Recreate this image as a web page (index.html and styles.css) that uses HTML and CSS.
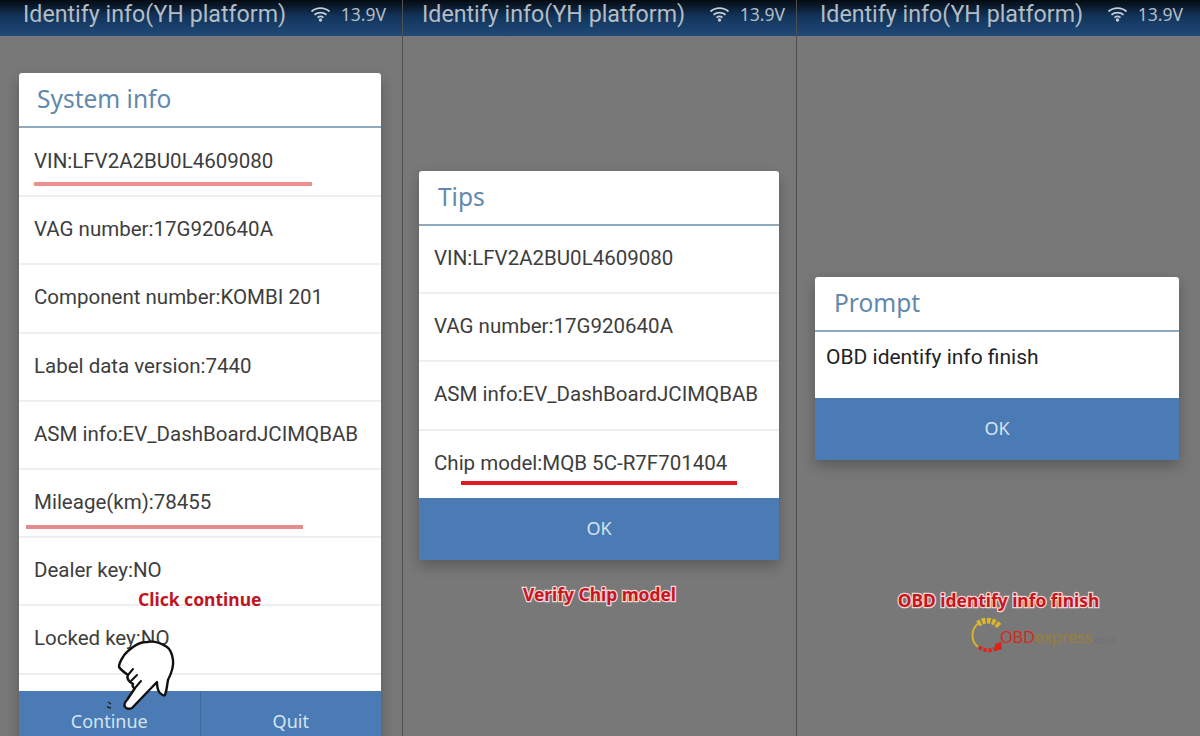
FILE: index.html
```html
<!DOCTYPE html>
<html>
<head>
	<title>Identify info (YH platform)</title>
	<link rel="stylesheet" href="styles.css">
</head>
<body>
	<div class="screens">

		<!-- Left screen: system info -->
		<section class="screen screen-system">
			<header class="topbar">
				<span class="topbar-title">Identify info(YH platform)</span>
				<span class="topbar-status">
					<svg class="wifi" viewBox="0 0 20 16"><path d="M1 5.5C6 1 14 1 19 5.5M4 8.8C7.5 5.8 12.5 5.8 16 8.8M7 11.6C8.8 10.2 11.2 10.2 13 11.6" fill="none" stroke="#c4ccd4" stroke-width="1.8"/><circle cx="10" cy="14" r="1.7" fill="#c4ccd4"/></svg>
					13.9V
				</span>
			</header>
			<div class="dialog">
				<h2 class="dialog-title">System info</h2>
				<div class="row">VIN:LFV2A2BU0L4609080<i class="mark mark-vin"></i></div>
				<div class="row">VAG number:17G920640A</div>
				<div class="row">Component number:KOMBI 201</div>
				<div class="row">Label data version:7440</div>
				<div class="row">ASM info:EV_DashBoardJCIMQBAB</div>
				<div class="row">Mileage(km):78455<i class="mark mark-km"></i></div>
				<div class="row">Dealer key:NO</div>
				<div class="row">Locked key:NO</div>
				<div class="row row-empty"></div>
				<div class="buttons">
					<div class="btn">Continue</div>
					<div class="btn">Quit</div>
				</div>
			</div>
			<span class="note note-click">Click continue</span>
			<svg class="hand" viewBox="0 0 60 75">
				<path d="M8 69C10 71 13 71 15 70L40 44C40 48 41 53 43 55C45 57 47 58 48 57C50 52 50 47 51 42C54 36 57 29 56 22C55 15 53 11 50 9C44 5 36 3 30 4C25 4 20 6 16 9C12 12 8 15 6 19C4 22 2 26 2 29C4 32 8 35 11 37C10 39 11 42 13 44L16 46C15 48 16 50 18 50L10 62C8 64 7 67 8 69Z" fill="#fff" stroke="#111" stroke-width="2.4" stroke-linejoin="round"/>
				<path d="M11 37L16 31M13 44L20 37M18 50L24 43" fill="none" stroke="#111" stroke-width="2" stroke-linecap="round"/>
			</svg>
			<svg class="tap" viewBox="0 0 10 10"><path d="M1 1L4 3M0 6L4 7" stroke="#222" stroke-width="1.4"/></svg>
		</section>

		<!-- Middle screen: chip model -->
		<section class="screen screen-tips">
			<header class="topbar">
				<span class="topbar-title">Identify info(YH platform)</span>
				<span class="topbar-status">
					<svg class="wifi" viewBox="0 0 20 16"><path d="M1 5.5C6 1 14 1 19 5.5M4 8.8C7.5 5.8 12.5 5.8 16 8.8M7 11.6C8.8 10.2 11.2 10.2 13 11.6" fill="none" stroke="#c4ccd4" stroke-width="1.8"/><circle cx="10" cy="14" r="1.7" fill="#c4ccd4"/></svg>
					13.9V
				</span>
			</header>
			<div class="dialog">
				<h2 class="dialog-title">Tips</h2>
				<div class="row">VIN:LFV2A2BU0L4609080</div>
				<div class="row">VAG number:17G920640A</div>
				<div class="row">ASM info:EV_DashBoardJCIMQBAB</div>
				<div class="row row-last">Chip model:MQB 5C-R7F701404<i class="mark mark-chip"></i></div>
				<div class="buttons">
					<div class="btn">OK</div>
				</div>
			</div>
			<p class="caption">Verify Chip model</p>
		</section>

		<!-- Right screen: finished -->
		<section class="screen screen-prompt">
			<header class="topbar">
				<span class="topbar-title">Identify info(YH platform)</span>
				<span class="topbar-status">
					<svg class="wifi" viewBox="0 0 20 16"><path d="M1 5.5C6 1 14 1 19 5.5M4 8.8C7.5 5.8 12.5 5.8 16 8.8M7 11.6C8.8 10.2 11.2 10.2 13 11.6" fill="none" stroke="#c4ccd4" stroke-width="1.8"/><circle cx="10" cy="14" r="1.7" fill="#c4ccd4"/></svg>
					13.9V
				</span>
			</header>
			<div class="dialog">
				<h2 class="dialog-title">Prompt</h2>
				<div class="row row-last">OBD identify info finish</div>
				<div class="buttons">
					<div class="btn">OK</div>
				</div>
			</div>
			<p class="caption">OBD identify info finish</p>
			<div class="logo">
				<svg class="logo-ring" viewBox="0 0 36 36">
					<path d="M29 8A15 15 0 0 0 8 6" fill="none" stroke="#dcb828" stroke-width="6" stroke-dasharray="3.5 1.5"/>
					<path d="M9 5A15 15 0 0 0 8 29" fill="none" stroke="#d8b828" stroke-width="1.8"/>
					<path d="M9 29A15 15 0 0 0 28 29" fill="none" stroke="#d8281e" stroke-width="4" stroke-dasharray="3.5 1.5"/>
					<path d="M25 26L31 24L32 31L25 33Z" fill="#e02018"/>
				</svg>
				<span class="logo-text"><b>OBD</b>express<small>.co.uk</small></span>
			</div>
		</section>

	</div>
</body>
</html>
```
FILE: styles.css
```css
body {
	margin: 0;
	background-color: #777;
	font-family: "Noto Sans", sans-serif;
}

.screens {
	display: grid;
	grid-template-columns: 403px 394px 403px;
	height: 736px;
	overflow: hidden;
}

.screen {
	position: relative;
	overflow: hidden;
	background-color: #787878;
	border-right: 1px solid #4e4e4e;
}

.screen-prompt {
	border-right: none;
}

/* Top bar, cut off by the top of the picture */
.topbar {
	display: flex;
	justify-content: space-between;
	align-items: center;
	height: 36px;
	box-sizing: border-box;
	padding: 0 16px 9px 23px;
	background: linear-gradient(#050a10 0, #12345a 45%, #1f4a78 100%);
	color: #b4bcc4;
}

.screen-tips .topbar {
	padding-left: 19px;
	padding-right: 11px;
}

.screen-prompt .topbar {
	padding-left: 23px;
	padding-right: 17px;
}

.topbar-title {
	flex: none;
	font-family: Roboto, sans-serif;
	font-size: 23.2px;
	line-height: 26px;
	white-space: nowrap;
}

.topbar-status {
	display: flex;
	align-items: center;
	gap: 10px;
	font-size: 17.5px;
	line-height: 26px;
}

.wifi {
	width: 21px;
	height: 16px;
}

/* Dialogs */
.dialog {
	background-color: #fff;
	border-radius: 3px;
	box-shadow: 0 6px 14px rgba(0,0,0,0.25);
	color: #3d3d3d;
}

.screen-system .dialog {
	margin: 37px 0 0 19px;
	width: 362px;
}

.screen-tips .dialog {
	margin: 135px 0 0 16px;
	width: 360px;
}

.screen-prompt .dialog {
	margin: 241px 0 0 18px;
	width: 364px;
}

.dialog-title {
	height: 55px;
	box-sizing: border-box;
	margin: 0;
	padding-left: 19px;
	border-bottom: 2px solid #8ea8bd;
	color: #6288ad;
	font-size: 24.5px;
	font-weight: 400;
	line-height: 52px;
}

.screen-system .dialog-title {
	margin-bottom: 1px;
	padding-left: 18px;
}

.row {
	position: relative;
	height: 68.2px;
	box-sizing: border-box;
	padding-left: 15px;
	border-bottom: 2px solid #eeeeee;
	font-family: Roboto, sans-serif;
	font-size: 20.5px;
	line-height: 65px;
	white-space: nowrap;
}

.row-last {
	height: 67.2px;
	border-bottom: none;
}

.screen-prompt .row {
	height: 66px;
	padding-left: 11px;
	color: #222;
	font-size: 21px;
	line-height: 50px;
}

.row-empty {
	height: 16px;
	border-bottom: none;
}

.buttons {
	display: flex;
	height: 62px;
	background-color: #4a7bb4;
}

.btn {
	flex: 1;
	color: #d5e4f0;
	font-size: 18px;
	line-height: 60px;
	text-align: center;
}

.btn + .btn {
	border-left: 1px solid #3c6a9e;
}

/* Hand drawn marks on top of the screenshot */
.mark {
	position: absolute;
	height: 4px;
	background-color: #ee9090;
}

.mark-vin {
	left: 15px;
	top: 53px;
	width: 278px;
}

.mark-km {
	left: 7px;
	top: 55px;
	width: 277px;
	background-color: #e58c8c;
}

.mark-chip {
	left: 42px;
	top: 50px;
	width: 276px;
	background-color: #e01a22;
}

.note-click {
	position: absolute;
	left: 138px;
	top: 587px;
	color: #c0141e;
	font-size: 17.5px;
	font-weight: 700;
	line-height: 24px;
}

.caption {
	position: absolute;
	left: 0;
	right: 0;
	margin: 0;
	color: #c8141e;
	font-size: 17.4px;
	font-weight: 700;
	line-height: 24px;
	text-align: center;
	-webkit-text-stroke: 2.5px #f4d8d8;
	paint-order: stroke fill;
}

.screen-tips .caption {
	top: 582px;
}

.screen-prompt .caption {
	top: 588px;
}

.hand {
	position: absolute;
	left: 117px;
	top: 638px;
	width: 60px;
	height: 75px;
}

.tap {
	position: absolute;
	left: 107px;
	top: 701px;
	width: 10px;
	height: 10px;
}

/* Watermark */
.logo {
	position: absolute;
	left: 173px;
	top: 618px;
	display: flex;
	align-items: center;
}

.logo-ring {
	width: 36px;
	height: 36px;
}

.logo-text {
	margin-left: -6px;
	color: #98803a;
	font-size: 16.5px;
	letter-spacing: -0.3px;
}

.logo-text b {
	color: #d8281e;
	font-weight: 400;
}

.logo-text small {
	color: #6f6f6f;
	font-size: 9px;
}
```
